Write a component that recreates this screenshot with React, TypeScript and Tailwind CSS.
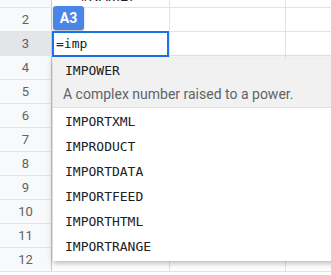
const rows = [1, 2, 3, 4, 5, 6, 7, 8, 9, 10, 11, 12];

const items = [
  "IMPORTXML",
  "IMPRODUCT",
  "IMPORTDATA",
  "IMPORTFEED",
  "IMPORTHTML",
  "IMPORTRANGE",
];

const mono = "font-['DejaVu_Sans_Mono',monospace]";

export default function App() {
  return (
    <div className="relative h-[275px] w-[331px] overflow-hidden bg-white font-['Roboto',sans-serif]">
      {/* grid */}
      <div className="-mt-[16px] flex flex-col">
        {rows.map((r) => (
          <div key={r} className="flex h-[24px] border-b border-[#e2e3e3]">
            <div
              className={
                "flex w-[52px] shrink-0 items-center justify-center border-r border-[#c7c7c7] text-[13px] text-[#5f6368] " +
                (r === 3 ? "bg-[#e3e5e8]" : "bg-[#f8f9fa]")
              }
            >
              {r}
            </div>
            <div className="w-[118px] shrink-0 border-r border-[#e2e3e3] pl-[28px] text-[14px] leading-[24px] text-[#202124]">
              {r === 1 ? "#NAME?" : ""}
            </div>
            <div className="w-[116px] shrink-0 border-r border-[#e2e3e3]" />
            <div className="flex-1" />
          </div>
        ))}
      </div>

      {/* cell reference badge */}
      <div className="absolute left-[53px] top-[6px] flex h-[24px] w-[31px] items-center justify-center rounded-[3px] bg-[#4a86e8] text-[14px] font-bold text-white shadow-[0_1px_2px_rgba(0,0,0,0.3)]">
        A3
      </div>

      {/* cell editor */}
      <div
        className={
          "absolute left-[52px] top-[31px] flex h-[26px] w-[117px] items-center border-2 border-[#1a73e8] bg-white pl-[2px] text-[13px] text-[#202124] " +
          mono
        }
      >
        =imp
      </div>

      {/* autocomplete */}
      <div className="absolute left-[53px] top-[58px] h-[203px] w-[300px] bg-white shadow-[0_2px_6px_rgba(0,0,0,0.3)]">
        <div className="h-[50px] border-b border-[#e0e0e0] bg-[#f1f1f1]">
          <div className={"pl-[12px] pt-[4px] text-[13px] leading-[18px] text-[#202124] " + mono}>
            IMPOWER
          </div>
          <div className="pl-[10px] pt-[5px] text-[14px] leading-[18px] text-[#5f6368]">
            A complex number raised to a power.
          </div>
        </div>
        <div className="flex flex-col pt-[1px]">
          {items.map((it) => (
            <div
              key={it}
              className={"h-[25px] pl-[12px] text-[13px] leading-[25px] text-[#202124] " + mono}
            >
              {it}
            </div>
          ))}
        </div>
      </div>
    </div>
  );
}
